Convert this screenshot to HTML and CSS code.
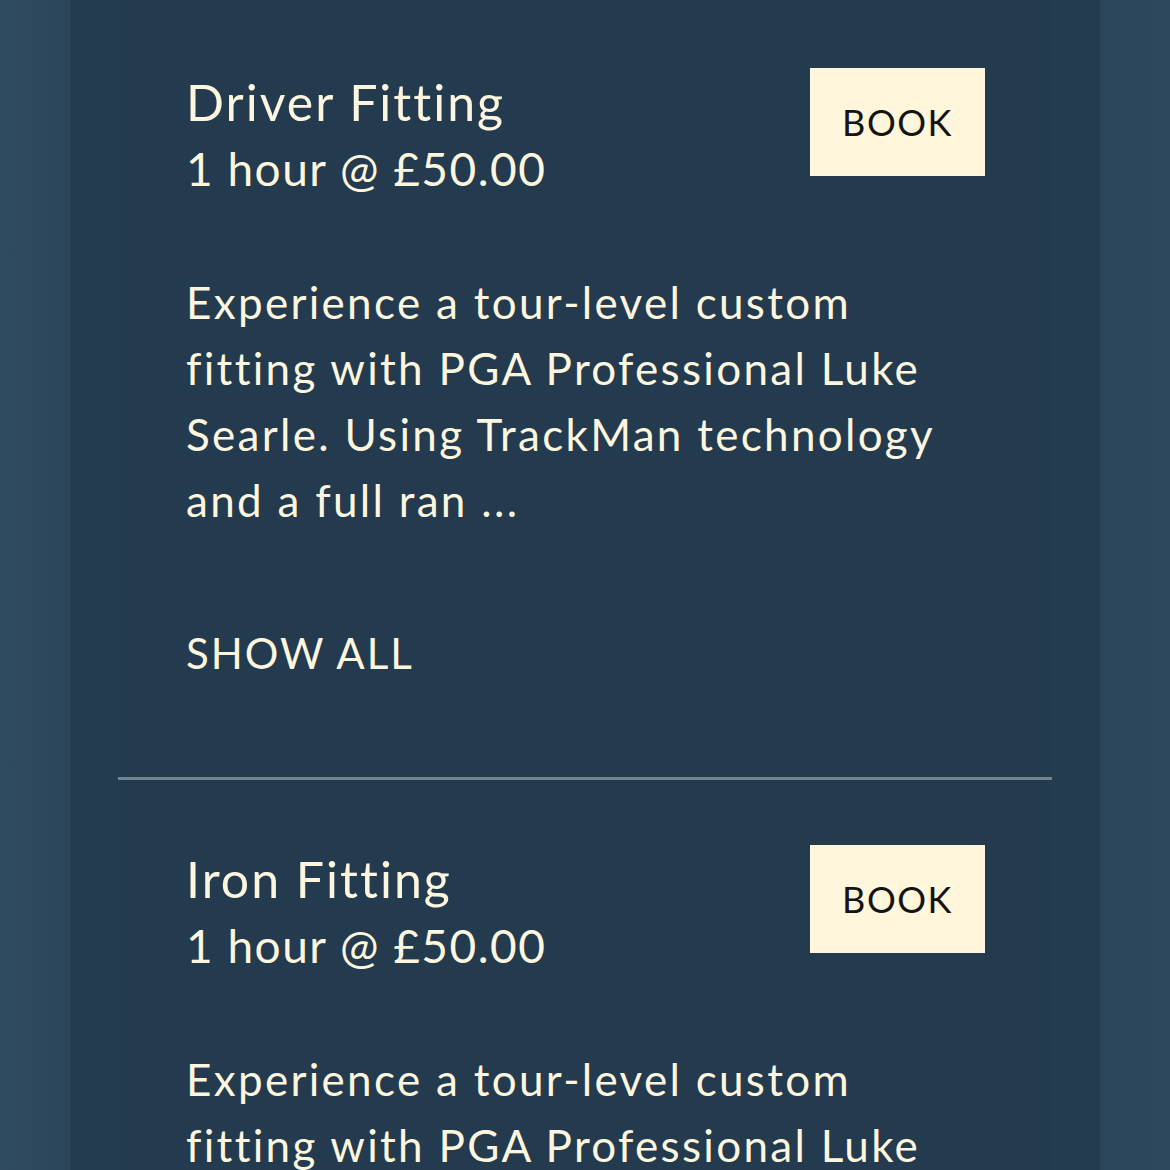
FILE: index.html
```html
<!DOCTYPE html>
<html lang="en">
<head>
    <meta charset="UTF-8">
    <meta name="viewport" content="width=device-width, initial-scale=1.0">
    <title>Club Fitting</title>
    <link rel="stylesheet" href="styles.css">
</head>
<body>
    <div id="page">
        <div id="services">
            <div class="service">
                <div class="service-head">
                    <div class="service-info">
                        <h2 class="service-title">Driver Fitting</h2>
                        <p class="service-price">1 hour @ £50.00</p>
                    </div>
                    <button class="book-button">BOOK</button>
                </div>
                <p class="service-desc">Experience a tour-level custom fitting with PGA Professional Luke Searle. Using TrackMan technology and a full ran ...</p>
                <a class="show-all" href="#">SHOW ALL</a>
            </div>

            <div class="service">
                <div class="service-head">
                    <div class="service-info">
                        <h2 class="service-title">Iron Fitting</h2>
                        <p class="service-price">1 hour @ £50.00</p>
                    </div>
                    <button class="book-button">BOOK</button>
                </div>
                <p class="service-desc">Experience a tour-level custom fitting with PGA Professional Luke Searle. Using TrackMan technology and a full ran ...</p>
                <a class="show-all" href="#">SHOW ALL</a>
            </div>
        </div>
    </div>
</body>
</html>
```

FILE: styles.css
```css
body, html {
    margin: 0;
    padding: 0;
    height: 100%;
    overflow: hidden;
    background: linear-gradient(90deg, #2f4b5f 0%, #2b465a 6%, #2b465a 94%, #2d485c 100%);
    font-family: Lato, "Open Sans", sans-serif;
    font-variant-ligatures: none;
    color: #fdf6de;
}

#page {
    width: 1030px;
    min-height: 100%;
    margin-left: 70px;
    padding: 0 48px;
    box-sizing: border-box;
    background-color: #233c50;
}

#services {
    background-color: #233a4f;
    min-height: 1170px;
    padding-top: 3px;
}

.service {
    padding: 65px 67px 99px 68px;
    border-bottom: 3px solid #6f8592;
}

.service-head {
    display: flex;
    justify-content: space-between;
    align-items: flex-start;
}

.service-title {
    margin: 0;
    margin-top: 4px;
    font-size: 50px;
    font-weight: 400;
    line-height: 60px;
    letter-spacing: 2px;
}

.service-price {
    margin: 0;
    margin-top: 4px;
    font-size: 46px;
    line-height: 66px;
    letter-spacing: 1.5px;
}

.book-button {
    width: 175px;
    height: 108px;
    background-color: #fff6dc;
    color: #141414;
    border: none;
    border-radius: 0;
    font-family: Lato, "Open Sans", sans-serif;
    font-size: 36px;
    letter-spacing: 1.5px;
    padding: 0;
    cursor: pointer;
}

.service-desc {
    margin: 67px 0 0 0;
    font-size: 44px;
    line-height: 66px;
    letter-spacing: 2.3px;
    max-width: 775px;
}

.show-all {
    display: block;
    margin-top: 95px;
    font-size: 42px;
    line-height: 50px;
    letter-spacing: 2px;
    color: #fdf6de;
    text-decoration: none;
}
```
